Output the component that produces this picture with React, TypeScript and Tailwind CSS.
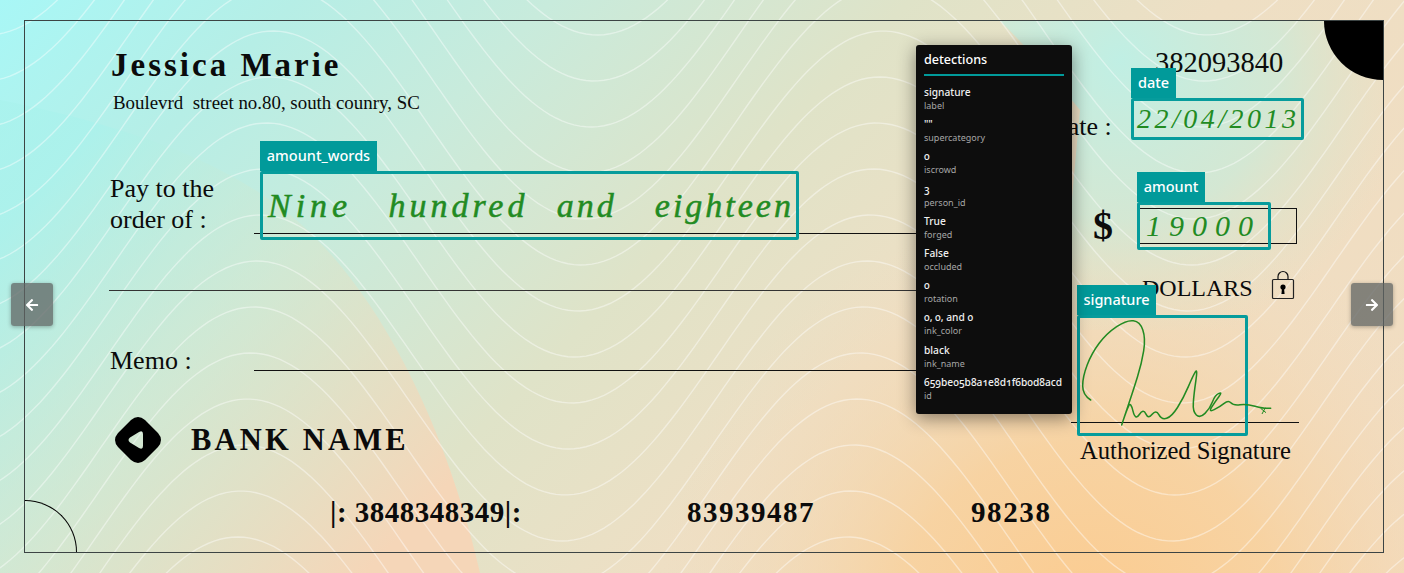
import React, { useMemo } from "react";
import { FaArrowLeft, FaArrowRight } from "react-icons/fa";

const serif = "font-['Liberation_Serif',serif]";

function contourPaths() {
  const out: string[] = [];
  for (let k = -8; k < 22; k++) {
    let d = "";
    const base = -105 + k * 46;
    for (let x = -20; x <= 1424; x += 6) {
      const shift = -base * 0.07;
      const ph = (2 * Math.PI * (x - 285 - shift)) / 610;
      const y = base + 140 * -Math.cos(ph);
      d += `${d ? "L" : "M"}${x} ${y.toFixed(1)}`;
    }
    out.push(d);
  }
  return out;
}

function smooth(pts: number[][]) {
  let d = `M${pts[0][0]} ${pts[0][1]}`;
  for (let i = 1; i < pts.length - 1; i++) {
    const mx = (pts[i][0] + pts[i + 1][0]) / 2;
    const my = (pts[i][1] + pts[i + 1][1]) / 2;
    d += `Q${pts[i][0]} ${pts[i][1]} ${mx} ${my}`;
  }
  const l = pts[pts.length - 1];
  return d + `L${l[0]} ${l[1]}`;
}

const signature = smooth([
  [572, 420], [548, 405], [548, 350], [575, 280], [620, 220], [680, 180], [720, 185], [737, 235], [725, 310], [700, 390], [680, 450], [660, 510],
  [680, 450], [692, 425], [706, 482], [730, 445], [745, 478], [768, 448], [785, 480], [815, 470], [850, 415], [880, 345], [893, 325], [882, 400], [878, 455], [900, 475], [930, 445], [945, 405], [968, 395], [945, 425], [925, 458], [960, 440], [985, 420], [1000, 437], [1040, 432], [1090, 445], [1112, 445],
]);

function Background() {
  const lines = useMemo(contourPaths, []);
  return (
    <svg className="absolute inset-0" width="1404" height="573" viewBox="0 0 1404 573">
      <defs>
        <linearGradient id="base" gradientUnits="userSpaceOnUse" x1="0" y1="0" x2="988" y2="988">
          <stop offset="0" stopColor="#a8f7f6" />
          <stop offset="0.15" stopColor="#b6eee6" />
          <stop offset="0.28" stopColor="#c8ebdc" />
          <stop offset="0.46" stopColor="#dfe3c8" />
          <stop offset="0.62" stopColor="#eedfc4" />
          <stop offset="1" stopColor="#f2dcc0" />
        </linearGradient>
        <radialGradient id="orange" gradientUnits="userSpaceOnUse" cx="1090" cy="640" r="440">
          <stop offset="0" stopColor="#fcca8c" />
          <stop offset="0.45" stopColor="#f9d09a" stopOpacity="0.8" />
          <stop offset="1" stopColor="#f2dcc0" stopOpacity="0" />
        </radialGradient>
        <linearGradient id="blob" gradientUnits="userSpaceOnUse" x1="100" y1="120" x2="470" y2="460">
          <stop offset="0" stopColor="#a8f2ec" stopOpacity="0.6" />
          <stop offset="0.45" stopColor="#d8e6cc" stopOpacity="0.5" />
          <stop offset="1" stopColor="#f5d6b8" stopOpacity="1" />
        </linearGradient>
        <radialGradient id="tr" gradientUnits="userSpaceOnUse" cx="1120" cy="60" r="290">
          <stop offset="0" stopColor="#c0efe4" />
          <stop offset="0.55" stopColor="#cfe9d6" stopOpacity="0.85" />
          <stop offset="1" stopColor="#dfe3c8" stopOpacity="0" />
        </radialGradient>
      </defs>
      <rect width="1404" height="573" fill="url(#base)" />
      <rect width="1404" height="573" fill="url(#orange)" />
      <path d="M0 100C100 120 200 150 270 200C360 260 440 400 480 573L0 573Z" fill="url(#blob)" />
      <path d="M1000 21L1383 21L1383 330L1060 330L1080 110Q1040 60 1000 21Z" fill="url(#tr)" />
      <g fill="none" stroke="#ffffff" strokeOpacity="0.42" strokeWidth="1.4">
        {lines.map((d, i) => (
          <path key={i} d={d} />
        ))}
      </g>
    </svg>
  );
}

function Tag({ label, cls, tagCls, children }: { label: string; cls: string; tagCls: string; children?: React.ReactNode }) {
  return (
    <div className={`absolute border-[3px] border-[#069c9c] rounded-[2px] ${cls}`}>
      <div className={`absolute left-[-3px] bottom-[calc(100%+3px)] h-[30px] bg-[#019a9a] flex items-center justify-center text-white text-[14.5px] font-medium font-['Noto_Sans',sans-serif] ${tagCls}`}>
        {label}
      </div>
      {children}
    </div>
  );
}

const hand = "font-['Liberation_Serif',serif] italic text-[#228b22]";

const rows: [string, string][] = [
  ["signature", "label"],
  ['""', "supercategory"],
  ["0", "iscrowd"],
  ["3", "person_id"],
  ["True", "forged"],
  ["False", "occluded"],
  ["0", "rotation"],
  ["0, 0, and 0", "ink_color"],
  ["black", "ink_name"],
  ["659be05b8a1e8d1f6b0d8acd", "id"],
];

export default function App() {
  return (
    <div className="relative w-[1404px] h-[573px] overflow-hidden">
      <Background />

      {/* cheque */}
      <div className={`relative ml-6 mt-5 w-[1360px] h-[533px] border border-[#3c4444] flex text-[#0b0b0b] ${serif}`}>
        <div className="absolute right-0 top-0 w-[59px] h-[59px] bg-black rounded-bl-full" />
        <div className="absolute left-0 bottom-0 w-[52px] h-[52px] border-t border-r border-black rounded-tr-full" />

        <div className="w-[1015px] pl-[86px] flex flex-col">
          <div className="mt-[23px] text-[33px] leading-[42px] font-bold tracking-[3px]">Jessica Marie</div>
          <div className="mt-[6px] ml-[2px] text-[18.9px] leading-[22px] whitespace-pre">Boulevrd  street no.80, south counry, SC</div>
          <div className="mt-[59px] flex items-end">
            <div className="w-[144px] text-[26px] leading-[31px] ml-[-1px]">
              Pay to the
              <br />
              order of :
            </div>
            <div className="flex-1 border-b border-[#111] mb-[1px]" />
          </div>
          <div className="mt-[55px] ml-[-2px] border-b border-[#333]" />
          <div className="mt-[54px] flex items-end">
            <div className="w-[144px] text-[26px] leading-[31px] ml-[-1px]">Memo :</div>
            <div className="flex-1 border-b-[1.5px] border-[#111] mb-[5px]" />
          </div>
          <div className="mt-[41px] ml-[4px] flex items-center gap-[30px]">
            <svg width="46" height="46" viewBox="0 0 46 46">
              <path
                fillRule="evenodd"
                d="M16 3Q23 -3 30 3L43 16Q49 23 43 30L30 43Q23 49 16 43L3 30Q-3 23 3 16ZM15 20.5L24 15Q28 13 28 17L28 29Q28 33 24 31L15 25.5Q12 23 15 20.5Z"
                fill="#000"
              />
            </svg>
            <span className="text-[30.5px] leading-[34px] font-bold tracking-[3.2px]">BANK NAME</span>
          </div>
          <div className="mt-[33px] ml-[219px] flex text-[29px] leading-[32px] font-bold whitespace-nowrap">
            <span className="w-[357px] shrink-0 tracking-[0.5px]">|: 3848348349|:</span>
            <span className="w-[284px] shrink-0 tracking-[1.5px]">83939487</span>
            <span className="shrink-0 tracking-[1.6px]">98238</span>
          </div>
        </div>

        <div className="flex-1 flex flex-col">
          <div className="mt-[26px] ml-[115px] text-[28.5px] leading-[32px]">382093840</div>
          <div className="mt-[32px] ml-[9px] text-[26px] leading-[31px]">Date :</div>
          <div className="mt-[66px] ml-[53px] flex items-center gap-[24px]">
            <span className="text-[40px] leading-[36px] font-bold">$</span>
            <div className="w-[160px] h-[36px] border-[1.5px] border-[#111]" />
          </div>
          <div className="mt-[28px] ml-[102px] flex items-center gap-[18px]">
            <span className="text-[24px] leading-[32px]">DOLLARS</span>
            <svg width="24" height="30" viewBox="0 0 24 30" className="mt-[-6px]">
              <path d="M7 10V6.5a5 5 0 0 1 10 0V10" fill="none" stroke="#111" strokeWidth="1.2" />
              <rect x="1.5" y="9.5" width="21" height="19" rx="1" fill="none" stroke="#222" strokeWidth="1.2" />
              <circle cx="12" cy="17" r="2.6" fill="#000" />
              <path d="M11 18h2l.6 6h-3.2z" fill="#000" />
            </svg>
          </div>
          <div className="mt-[118px] ml-[31px] w-[228px] border-b border-[#111]" />
          <div className="mt-[13px] ml-[40px] text-[24.6px] leading-[30px] whitespace-nowrap">Authorized Signature</div>
        </div>
      </div>

      {/* annotations */}
      <Tag label="amount_words" cls="left-[260px] top-[171px] w-[539px] h-[69px]" tagCls="w-[117px]">
        <div className={`flex items-center h-full pl-[5px] pr-[2px] justify-between text-[34px] leading-[40px] [-webkit-text-stroke:0.5px_#228b22] ${hand}`}>
          <span className="tracking-[5px]">Nine</span>
          <span className="ml-[26px] tracking-[4px]">hundred</span>
          <span className="ml-[18px] tracking-[3px]">and</span>
          <span className="ml-[28px] tracking-[3px]">eighteen</span>
        </div>
      </Tag>
      <Tag label="date" cls="left-[1131px] top-[98px] w-[173px] h-[42px]" tagCls="w-[45px]">
        <div className={`flex items-center h-full pl-[3px] text-[28px] leading-[34px] tracking-[3.5px] whitespace-nowrap ${hand}`}>22/04/2013</div>
      </Tag>
      <Tag label="amount" cls="left-[1137px] top-[202px] w-[134px] h-[48px]" tagCls="w-[68px]">
        <div className={`flex items-center h-full pl-[6px] text-[30px] leading-[36px] tracking-[8px] whitespace-nowrap ${hand}`}>19000</div>
      </Tag>
      <Tag label="signature" cls="left-[1077px] top-[315px] w-[171px] h-[121px]" tagCls="w-[79px]" />
      <svg className="absolute left-[900px] top-[260px]" width="504" height="230" viewBox="0 0 1512 690">
        <path d={signature} fill="none" stroke="#228b22" strokeWidth="4.6" strokeLinejoin="round" strokeLinecap="round" />
        <path d="M1082 445L1098 458M1096 443L1086 462" fill="none" stroke="#228b22" strokeWidth="3" />
      </svg>

      {/* detections popup */}
      <div className="absolute left-[916px] top-[45px] w-[156px] h-[369px] bg-[#0d0d0d] rounded-[3px] shadow-[0_4px_18px_rgba(0,0,0,0.45)] px-2 font-['Noto_Sans',sans-serif] [font-variant-numeric:oldstyle-nums]">
        <div className="h-[31px] pt-[1px] flex items-center text-[12.6px] font-medium text-white border-b-2 border-[#019a9a]">detections</div>
        <div className="mt-[9px] flex flex-col gap-[5.2px]">
          {rows.map(([v, k]) => (
            <div key={k} className="flex flex-col">
              <span className="text-[10.2px] leading-[14px] font-medium text-[#f0f0f0] whitespace-nowrap">{v}</span>
              <span className="text-[9px] leading-[13px] text-[#a6a6a6]">{k}</span>
            </div>
          ))}
        </div>
      </div>

      {/* nav */}
      <button className="absolute left-[11px] top-[283px] w-[42px] h-[43px] rounded-[3px] bg-[#5f6361]/75 shadow-[0_1px_4px_rgba(0,0,0,0.3)] flex items-center justify-center text-white">
        <FaArrowLeft size={14} />
      </button>
      <button className="absolute left-[1351px] top-[283px] w-[42px] h-[43px] rounded-[3px] bg-[#5f6361]/75 shadow-[0_1px_4px_rgba(0,0,0,0.3)] flex items-center justify-center text-white">
        <FaArrowRight size={14} />
      </button>
    </div>
  );
}
